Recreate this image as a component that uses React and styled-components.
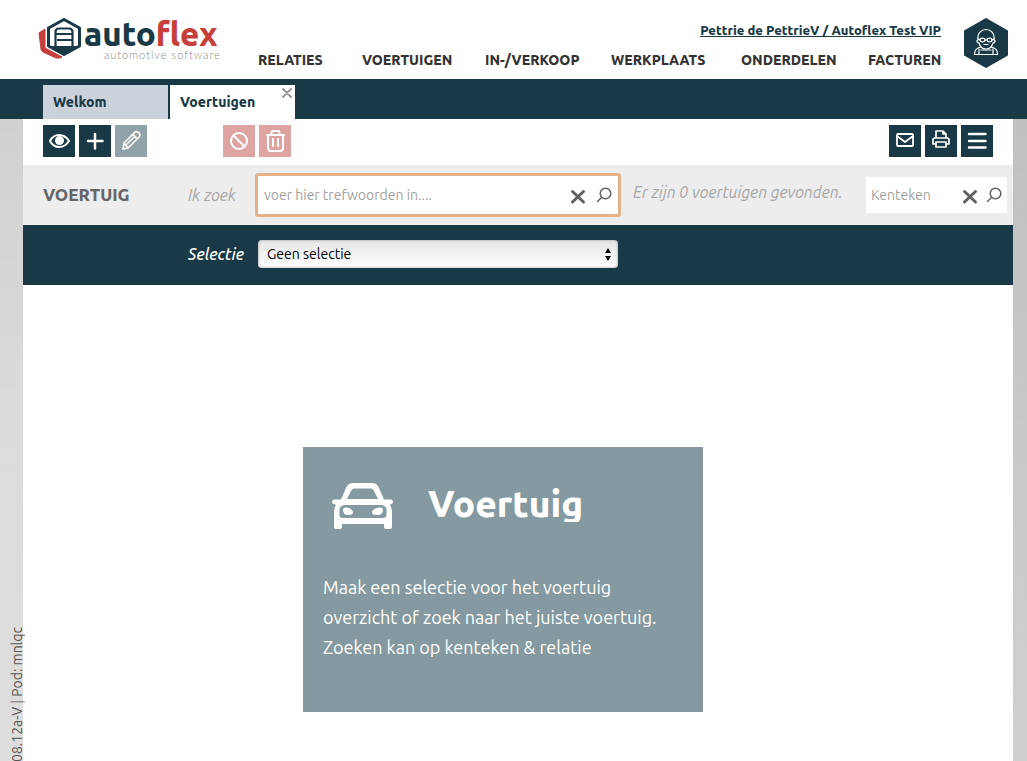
import React from "react";
import styled, { createGlobalStyle, css } from "styled-components";

const navy = "#183945";
const font = `Ubuntu, "Noto Sans", sans-serif`;

const Global = createGlobalStyle`
  * { box-sizing: border-box; }
  html, body, #root { height: 100%; }
  body { margin: 0; font-family: ${font}; color: #333; background: #ddd; }
  button, input, select { font-family: inherit; }
`;

const Page = styled.div`
  position: relative;
  min-height: 100%;
  display: flex;
  flex-direction: column;
  overflow: hidden;
  background:
    linear-gradient(180deg, #c0c0c0 119px, #c8c8c8 400px, #cfcfcf 100%) right / 14px 100% no-repeat,
    linear-gradient(180deg, #d0d0d0 119px, #dbdbdb 400px, #dedede 100%);
`;

const Header = styled.header`
  display: flex;
  height: 79px;
  padding: 0 19px 0 38px;
  background: #fff;
`;

const Logo = styled.a`
  display: flex;
  flex: 0 0 220px;
  padding-top: 17px;
  text-decoration: none;
`;

const Wordmark = styled.span`
  display: flex;
  flex-direction: column;
  padding-left: 3px;
`;

const Brand = styled.span`
  font-size: 33px;
  line-height: 34px;
  font-weight: 800;
  color: ${navy};
  em { font-style: normal; color: #c63f3b; }
`;

const Tagline = styled.span`
  padding-left: 20px;
  font-family: Lato, sans-serif;
  font-weight: 300;
  font-size: 11px;
  line-height: 8px;
  letter-spacing: 1px;
  color: #888;
`;

const HeaderMain = styled.div`
  flex: 1;
  display: flex;
  flex-direction: column;
  padding-top: 20px;
`;

const Account = styled.a`
  align-self: flex-end;
  margin-right: 1px;
  font-size: 13px;
  line-height: 20px;
  font-weight: 800;
  color: ${navy};
`;

const Nav = styled.nav`
  display: grid;
  grid-template-columns: 104fr 123fr 126fr 130fr 127fr 74fr;
  padding-top: 10px;
`;

const NavLink = styled.a`
  font-size: 14px;
  line-height: 20px;
  font-weight: 800;
  color: #333;
  text-decoration: none;
  white-space: nowrap;
`;

const Avatar = styled.button`
  width: 44px;
  height: 50px;
  margin: 18px 0 0 22px;
  padding: 0;
  border: 0;
  background: none;
  svg { display: block; }
`;

const Tabs = styled.div`
  display: flex;
  gap: 2px;
  height: 40px;
  padding: 6px 43px 0;
  background: ${navy};
`;

const Tab = styled.div`
  position: relative;
  width: 125px;
  background: ${(p) => (p.$active ? "#fff" : "#cbd2dc")};
`;

const TabLabel = styled.button`
  width: 100%;
  height: 100%;
  padding: 0 10px;
  border: 0;
  background: none;
  text-align: left;
  font-size: 14px;
  font-weight: 800;
  color: ${navy};
`;

const TabClose = styled.button`
  position: absolute;
  top: 3px;
  right: 3px;
  width: 10px;
  height: 10px;
  padding: 0;
  border: 0;
  background: none;
  color: #999;
  svg { display: block; }
`;

const Content = styled.main`
  flex: 1;
  display: flex;
  flex-direction: column;
  margin: 0 14px 0 23px;
  background: #fff;
`;

const Toolbar = styled.div`
  display: flex;
  gap: 4px;
  height: 46px;
  padding: 6px 20px;
`;

const ToolGroup = styled.div`
  display: flex;
  gap: 4px;
  ${(p) => p.$spaced && css`margin-left: 72px;`}
  ${(p) => p.$end && css`margin-left: auto;`}
`;

const tones = { navy, muted: "#91a3a8", danger: "#dea4a2" };

const ToolButton = styled.button`
  width: 32px;
  height: 32px;
  padding: 0;
  border: 0;
  color: #fff;
  background: ${(p) => tones[p.$tone || "navy"]};
  svg { display: block; }
`;

const SearchBar = styled.div`
  display: flex;
  align-items: center;
  height: 60px;
  padding: 0 6px 0 20px;
  background: #ededed;
`;

const Title = styled.h1`
  width: 145px;
  margin: 0;
  font-size: 17px;
  line-height: 20px;
  font-weight: 800;
  color: #666;
`;

const RowLabel = styled.label`
  width: 67px;
  font-size: 16px;
  line-height: 20px;
  font-style: italic;
  color: ${(p) => (p.$light ? "#fff" : "#a6a6a6")};
  font-weight: ${(p) => (p.$light ? 500 : 400)};
`;

const SearchField = styled.div`
  display: flex;
  align-items: center;
  width: ${(p) => (p.$focus ? 366 : 141)}px;
  height: ${(p) => (p.$focus ? 44 : 36)}px;
  padding: ${(p) => (p.$focus ? "0 5px 0 6px" : "0 4px 0 5px")};
  background: #fff;
  ${(p) => p.$focus && css`border: 3px solid #e4b188; border-radius: 3px;`}
`;

const SearchInput = styled.input`
  flex: 1;
  min-width: 0;
  padding: 0;
  border: 0;
  outline: 0;
  background: none;
  font-size: 14px;
  color: #333;
  &::placeholder { color: #a0a0a0; opacity: 1; }
`;

const FieldButtons = styled.div`
  display: flex;
  gap: ${(p) => p.$gap}px;
`;

const FieldButton = styled.button`
  width: 18px;
  height: 20px;
  padding: 0;
  border: 0;
  background: none;
  color: #606060;
  svg { display: block; }
`;

const Found = styled.output`
  flex: 1;
  padding: 0 0 6px 12px;
  font-size: 16px;
  line-height: 20px;
  font-style: italic;
  color: #a6a6a6;
  white-space: nowrap;
`;

const SelectBar = styled.div`
  display: flex;
  align-items: center;
  height: 60px;
  padding: 0 6px 2px 165px;
  background: ${navy};
`;

const SelectWrap = styled.div`
  position: relative;
  width: 360px;
  margin-left: 3px;
  svg { position: absolute; right: 6px; top: 8px; pointer-events: none; }
`;

const Select = styled.select`
  display: block;
  appearance: none;
  width: 100%;
  height: 28px;
  padding: 0 9px;
  border: 0;
  border-radius: 4px;
  font-size: 14px;
  color: #000;
  background: linear-gradient(#e6e6e6, #fff);
  box-shadow: inset 0 0 3px #999;
`;

const Stage = styled.div`
  display: flex;
  justify-content: center;
  padding: 162px 30px 49px 0;
`;

const Card = styled.section`
  width: 400px;
  min-height: 265px;
  padding: 35px 20px 20px;
  color: #fff;
  background: #849aa0;
`;

const CardHead = styled.div`
  display: flex;
  gap: 34px;
  padding-left: 8px;
  svg { display: block; }
`;

const CardTitle = styled.h2`
  height: 40px;
  margin: 0;
  overflow: hidden;
  font-size: 37px;
  line-height: 44px;
  font-weight: 800;
`;

const CardText = styled.p`
  margin: 40px 0 0;
  font-size: 18px;
  line-height: 30px;
  font-weight: 450;
  white-space: nowrap;
`;

const Version = styled.small`
  position: absolute;
  left: 7px;
  top: 627px;
  writing-mode: vertical-rl;
  transform: rotate(180deg);
  font-size: 14px;
  line-height: 20px;
  white-space: nowrap;
  color: #555;
`;

const Icon = ({ size = 32, w = size, h = size, sw = 2, children }) => (
  <svg width={w} height={h} viewBox={`0 0 ${w} ${h}`} fill="none" stroke="currentColor"
    strokeWidth={sw} strokeLinecap="round" strokeLinejoin="round" aria-hidden="true">
    {children}
  </svg>
);

const LogoMark = () => (
  <svg width="43" height="42" viewBox="0 0 43 42" aria-hidden="true">
    <path d="M1 16 L7 12 V31 L24 40 L22 41 H18 L5 35 Q3 34 3 32 Z" fill="#c63f3b" stroke="#c63f3b" strokeLinejoin="round" />
    <path d="M26 2.500 L41.500 11 V29 L26 37.500 L10.500 29 V11 Z" fill="#fff" stroke={navy} strokeWidth="3" strokeLinejoin="round" />
    <path d="M12 29 H40 L26 37 Z" fill={navy} />
    <path d="M17.500 29 V15 Q17.500 11.500 21 11.500 H31 Q34.500 11.500 34.500 15 V29 M17.500 17 H34.500 M19 23 H34" fill="none" stroke={navy} strokeWidth="2.200" />
  </svg>
);

const AvatarArt = () => (
  <svg width="44" height="50" viewBox="0 0 44 50" aria-hidden="true">
    <path d="M22 1 L43 13 V37 L22 49 L1 37 V13 Z" fill={navy} stroke={navy} strokeWidth="2" strokeLinejoin="round" />
    <g fill="none" stroke="#fff" strokeWidth="1.200" strokeLinecap="round">
      <path d="M14 22 C12 8 32 8 30 22 C32 22 31 25 29 25 C28 29 25 31 22 31 C19 31 16 29 15 25 C13 25 12 22 14 22 Z" />
      <ellipse cx="18.500" cy="22" rx="2.500" ry="1.800" />
      <ellipse cx="25.500" cy="22" rx="2.500" ry="1.800" />
      <path d="M21 22 H23 M16 22 L14 21 M28 22 L30 21 M20 26.500 H24" />
      <path d="M17 29 C13 30 10.500 31 10.500 36.500 H33.500 C33.500 31 31 30 27 29 M15 31 V36 M29 31 V36 M17 32 H27" />
    </g>
  </svg>
);

const CarArt = () => (
  <svg width="63" height="50" viewBox="0 0 63 50" fill="#fff" aria-hidden="true">
    <path fillRule="evenodd" d="M10 17.500 L15 6 Q17 1 22 1 H41 Q46 1 48 6 L53 17.500 H60 Q62 17.500 62 20 Q62 22 60 22 L59 23 Q61 26 61 30 V45 Q61 47 59 47 H55 Q53 47 53 45 V42 H11 V45 Q11 47 9 47 H5 Q3 47 3 45 V30 Q3 26 5 23 L3 22 Q1 22 1 20 Q1 17.500 3 17.500 Z M16 17 H47 L43 9 Q42 6.500 40 6.500 H23 Q21 6.500 20 9 Z M13 23 Q8.500 24 8.500 28 V33 Q8.500 36 12 36 H52 Q55.500 36 55.500 33 V28 Q55.500 24 51 23 Z" />
    <path d="M12 28 Q12 25 16 25.500 Q22 27 22 30.500 Q22 33 17 33 Q12 33 12 28 Z M52 28 Q52 25 48 25.500 Q41 27 41 30.500 Q41 33 46 33 Q52 33 52 28 Z" />
  </svg>
);

const ClearIcon = () => (
  <Icon w={18} h={20} sw={3}><path d="M3.500 6.500 L14.500 17 M14.500 6.500 L3.500 17" /></Icon>
);
const FindIcon = () => (
  <Icon w={18} h={20} sw={1.5}><circle cx="10.500" cy="8.500" r="5.300" /><path d="M6.500 12.500 L2.500 16.500" /></Icon>
);

const nav = ["Relaties", "Voertuigen", "In-/Verkoop", "Werkplaats", "Onderdelen", "Facturen"];

export default function App() {
  return (
    <>
      <Global />
      <Page>
        <Header>
          <Logo href="#" aria-label="Autoflex automotive software">
            <LogoMark />
            <Wordmark>
              <Brand>auto<em>flex</em></Brand>
              <Tagline>automotive software</Tagline>
            </Wordmark>
          </Logo>
          <HeaderMain>
            <Account href="#">Pettrie de PettrieV / Autoflex Test VIP</Account>
            <Nav>
              {nav.map((n) => <NavLink key={n} href="#">{n.toUpperCase()}</NavLink>)}
            </Nav>
          </HeaderMain>
          <Avatar aria-label="Profiel"><AvatarArt /></Avatar>
        </Header>

        <Tabs>
          <Tab><TabLabel>Welkom</TabLabel></Tab>
          <Tab $active>
            <TabLabel>Voertuigen</TabLabel>
            <TabClose aria-label="Sluiten">
              <Icon size={10} sw={2}><path d="M1 1 L9 9 M9 1 L1 9" /></Icon>
            </TabClose>
          </Tab>
        </Tabs>

        <Content>
          <Toolbar>
            <ToolGroup>
              <ToolButton aria-label="Bekijken">
                <Icon sw={2}>
                  <path d="M7 16 C11 8 21 8 26 16 C21 24 11 24 7 16 Z" />
                  <circle cx="16.500" cy="15.500" r="3.500" fill="currentColor" />
                </Icon>
              </ToolButton>
              <ToolButton aria-label="Toevoegen">
                <Icon sw={2.5}><path d="M16 9 V23.500 M9 16 H23.500" /></Icon>
              </ToolButton>
              <ToolButton $tone="muted" aria-label="Bewerken">
                <Icon sw={1.6}>
                  <path d="M8 24 L9 18 L20 7 Q22 6 24 8 Q26 10 24 12 L13 23 Z M18 9 L22 14 M9 18 L13 23 M12 19 L19 12" />
                </Icon>
              </ToolButton>
            </ToolGroup>
            <ToolGroup $spaced>
              <ToolButton $tone="danger" aria-label="Blokkeren">
                <Icon sw={2}><circle cx="16" cy="16" r="8" /><path d="M10.500 10.500 L21.500 21.500" /></Icon>
              </ToolButton>
              <ToolButton $tone="danger" aria-label="Verwijderen">
                <Icon sw={2}>
                  <path d="M8 10 H25 M12 10 L13 6 H20 L21 10 M9 10 V23 Q9 26 12 26 H21 Q24 26 24 23 V10 M14 14 V21 M19 14 V21" />
                </Icon>
              </ToolButton>
            </ToolGroup>
            <ToolGroup $end>
              <ToolButton aria-label="E-mail">
                <Icon sw={1.8}><rect x="8" y="9" width="16" height="12" rx="1" /><path d="M8 11 L16 17 L24 11" /></Icon>
              </ToolButton>
              <ToolButton aria-label="Afdrukken">
                <Icon sw={1.7}>
                  <path d="M11 13 V6 H18 L21 9 V13 M11 19 H8 V15 Q8 13 10 13 H22 Q24 13 24 15 V19 H21 M11 17 H21 V22 H11 Z M18 6 V9 H21" />
                </Icon>
              </ToolButton>
              <ToolButton aria-label="Menu">
                <Icon sw={2.4}><path d="M8 9 H24.500 M8 16 H24.500 M8 22.500 H24.500" /></Icon>
              </ToolButton>
            </ToolGroup>
          </Toolbar>

          <SearchBar>
            <Title>VOERTUIG</Title>
            <RowLabel htmlFor="zoek">Ik zoek</RowLabel>
            <SearchField $focus>
              <SearchInput id="zoek" placeholder="voer hier trefwoorden in...." />
              <FieldButtons $gap={8}>
                <FieldButton aria-label="Wissen"><ClearIcon /></FieldButton>
                <FieldButton aria-label="Zoeken"><FindIcon /></FieldButton>
              </FieldButtons>
            </SearchField>
            <Found>Er zijn 0 voertuigen gevonden.</Found>
            <SearchField>
              <SearchInput aria-label="Kenteken" placeholder="Kenteken" />
              <FieldButtons $gap={6}>
                <FieldButton aria-label="Kenteken wissen"><ClearIcon /></FieldButton>
                <FieldButton aria-label="Zoek kenteken"><FindIcon /></FieldButton>
              </FieldButtons>
            </SearchField>
          </SearchBar>

          <SelectBar>
            <RowLabel $light htmlFor="selectie">Selectie</RowLabel>
            <SelectWrap>
              <Select id="selectie" defaultValue="geen"><option value="geen">Geen selectie</option></Select>
              <svg width="8" height="13" viewBox="0 0 8 13" aria-hidden="true">
                <path d="M1 5 L4 0 L7 5 Z M1 8 L4 13 L7 8 Z" />
              </svg>
            </SelectWrap>
          </SelectBar>

          <Stage>
            <Card>
              <CardHead>
                <CarArt />
                <CardTitle>Voertuig</CardTitle>
              </CardHead>
              <CardText>
                Maak een selectie voor het voertuig<br />
                overzicht of zoek naar het juiste voertuig.<br />
                Zoeken kan op kenteken &amp; relatie
              </CardText>
            </Card>
          </Stage>
        </Content>
        <Version>08.12a-V | Pod: mnlqc</Version>
      </Page>
    </>
  );
}
